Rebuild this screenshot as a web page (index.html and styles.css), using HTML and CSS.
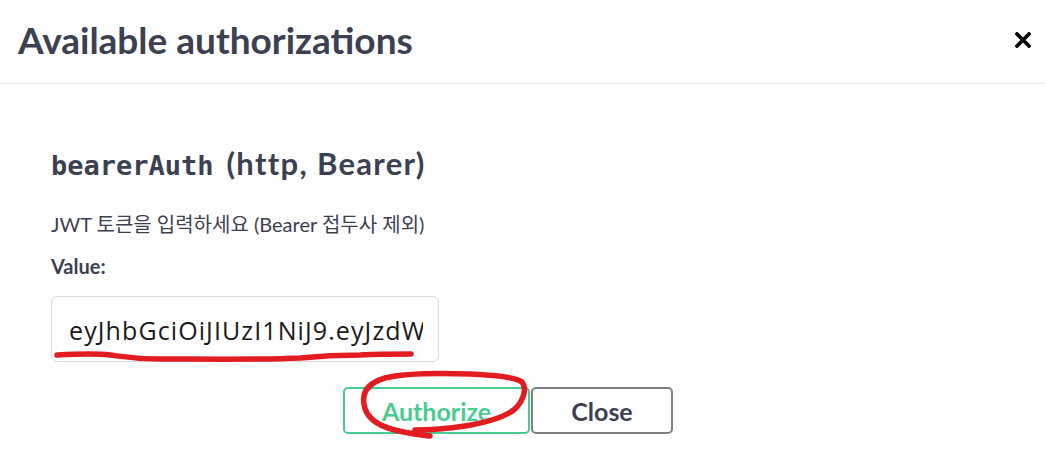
FILE: index.html
```html
<!DOCTYPE html>
<html lang="ko">
<head>
<meta charset="utf-8">
<title>Available authorizations</title>
<link rel="stylesheet" href="styles.css">
</head>
<body>
<div class="modal">
  <header class="modal-header">
    <h3 class="modal-title">Available authorizations</h3>
    <button class="close-modal" aria-label="Close">
      <svg width="16" height="16" viewBox="0 0 16 16"><path d="M2 2 L14 14 M14 2 L2 14" stroke="#000" stroke-width="3.6" stroke-linecap="square"/></svg>
    </button>
  </header>
  <section class="modal-body">
    <h4 class="scheme"><code>bearerAuth</code>(http, Bearer)</h4>
    <p class="desc">JWT 토큰을 입력하세요 (Bearer 접두사 제외)</p>
    <label class="label">Value:</label>
    <div class="input-box"><span class="input-text">eyJhbGciOiJIUzI1NiJ9.eyJzdWIiOiJ1c2VyIn0</span></div>
    <div class="btn-wrapper">
      <button class="btn authorize">Authorize</button>
      <button class="btn close">Close</button>
    </div>
  </section>
  <svg class="marks" width="1045" height="475" viewBox="0 0 1045 475">
    <path d="M57 355 C75 354 95 353 110 355 C125 357 135 359 160 359 C200 359 260 360 300 358 C320 356 335 355 360 355 C380 354 400 354 411 354" fill="none" stroke="#e31c22" stroke-width="5.5" stroke-linecap="round"/>
    <path d="M430 436 C415 434 405 433 395 430 C378 426 366 418 364 404 C362 392 368 383 385 378 C405 373 440 373 470 374 C495 375 515 377 522 382 C527 388 524 400 515 409 C505 417 490 422 465 426 C445 429 430 430 415 430" fill="none" stroke="#e31c22" stroke-width="5.5" stroke-linecap="round"/>
  </svg>
</div>
</body>
</html>
```
FILE: styles.css
```css
* { box-sizing: border-box; }
html, body { margin: 0; padding: 0; background: #fff; }
body {
  width: 1045px;
  height: 475px;
  overflow: hidden;
  font-family: Lato, "Noto Sans CJK KR", sans-serif;
  color: #3b4151;
}
.modal { position: relative; width: 1045px; height: 475px; }
.modal-header {
  display: flex;
  align-items: center;
  justify-content: space-between;
  height: 84px;
  padding: 0 14px 4px 18px;
  border-bottom: 1px solid #ebebeb;
}
.modal-title {
  margin: 0;
  font-size: 37px;
  font-weight: 700;
  letter-spacing: 0;
  color: #3b4151;
}
.close-modal {
  border: none;
  background: none;
  padding: 0;
  width: 16px;
  height: 16px;
  display: flex;
}
.modal-body { padding: 61px 0 0 51px; }
.scheme {
  margin: 0;
  font-size: 31px;
  font-weight: 700;
  letter-spacing: 1.3px;
  line-height: 36px;
  color: #3b4151;
}
.scheme code {
  font-family: "DejaVu Sans Mono", monospace;
  font-size: 27px;
  font-weight: 700;
  letter-spacing: 0;
  margin-right: 13px;
}
.desc {
  margin: 26px 0 0;
  font-family: Lato, "Noto Sans CJK KR", sans-serif;
  font-size: 20px;
  line-height: 28px;
}
.label {
  display: block;
  margin-top: 14px;
  font-size: 20px;
  font-weight: 700;
  line-height: 28px;
}
.input-box {
  margin-top: 16px;
  width: 388px;
  height: 66px;
  border: 1px solid #d9d9d9;
  border-radius: 6px;
  padding: 0 15px 0 17px;
  display: flex;
  align-items: center;
  overflow: hidden;
}
.input-text {
  white-space: nowrap;
  overflow: hidden;
  font-family: "Open Sans", sans-serif;
  font-size: 25px;
  letter-spacing: 1.1px;
  color: #1a1a1a;
  padding-top: 2px;
}
.btn-wrapper {
  display: flex;
  justify-content: center;
  padding-right: 80px;
  margin-top: 25px;
}
.btn {
  height: 47px;
  background: #fff;
  border-radius: 5px;
  font-family: Lato, sans-serif;
  font-size: 25px;
  font-weight: 700;
  padding: 0;
}
.authorize {
  width: 187px;
  border: 2.5px solid #49cc90;
  color: #49cc90;
  margin-right: 1px;
}
.close {
  width: 142px;
  border: 2.5px solid #808080;
  color: #3b4151;
}
.marks { position: absolute; left: 0; top: 0; pointer-events: none; }
```
